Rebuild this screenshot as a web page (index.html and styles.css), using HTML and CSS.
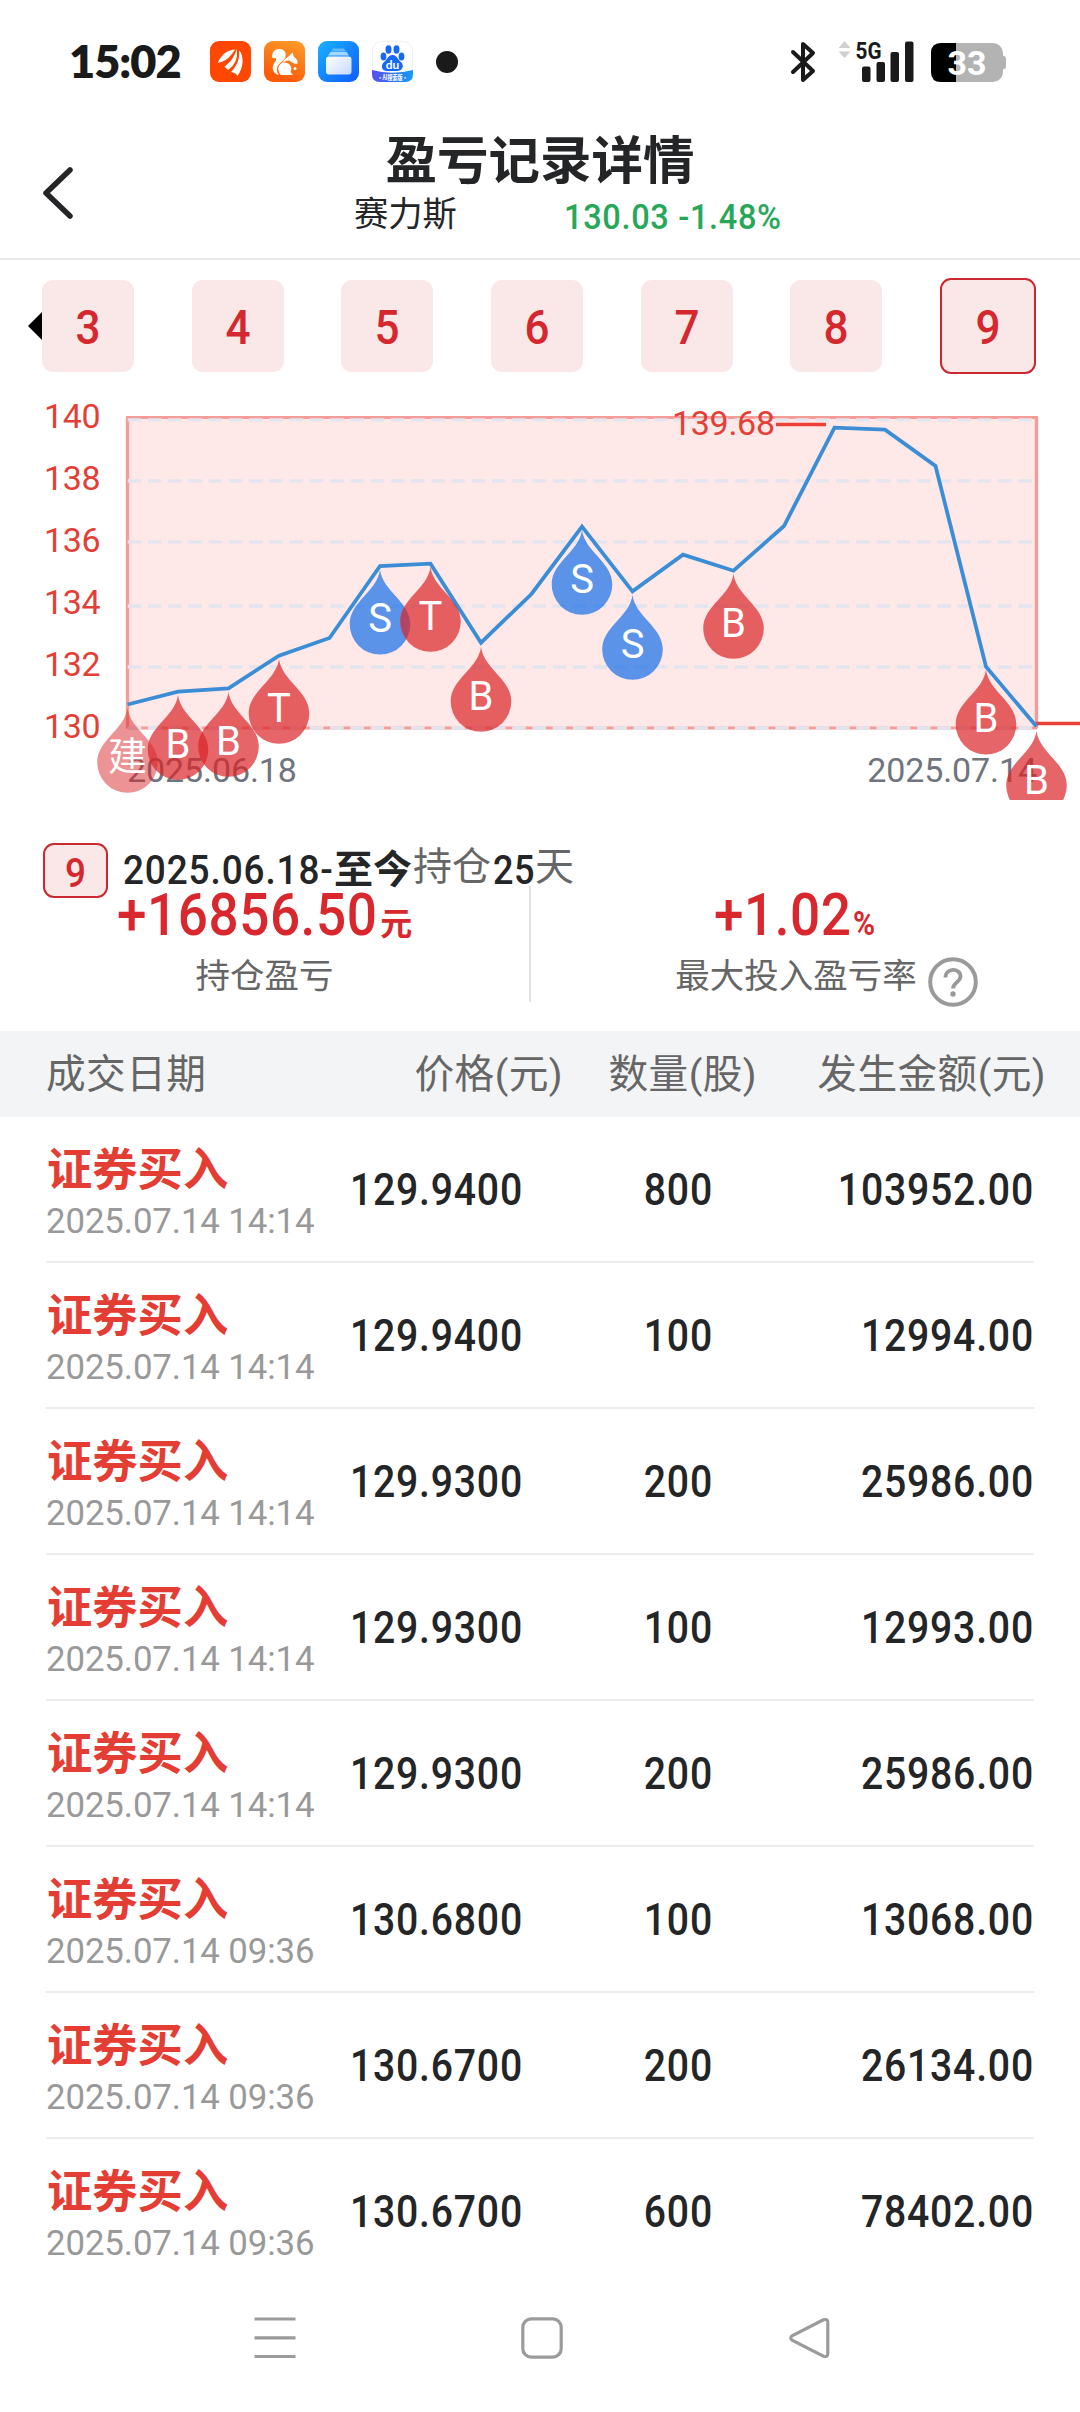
FILE: index.html
```html
<!DOCTYPE html>
<html lang="zh-CN">
<head>
<meta charset="utf-8">
<title>盈亏记录详情</title>
<link rel="stylesheet" href="styles.css">
</head>
<body>
<div class="statusbar">
  <span class="clock">15:02</span>
  <div class="apps">
    <svg class="app" viewBox="0 0 41 41"><rect width="41" height="41" rx="9" fill="#ff4700"/><path d="M8.500 20C13 12 18 9 25 8.500C21 15 17 20 8 22ZM14.500 25.500C22 20 25 14 26.500 8C28.500 17 25 24 18 29ZM21 31C28 24 30 16 29 9C34.500 15 33.500 27 27.500 35Q26.500 32 21 31Z" fill="#fff"/></svg>
    <svg class="app" viewBox="0 0 41 41"><defs><linearGradient id="uc" x1="1" y1="0" x2=".6" y2="1"><stop offset="0" stop-color="#ffa02c"/><stop offset="1" stop-color="#fb5a08"/></linearGradient></defs><rect width="41" height="41" rx="9" fill="url(#uc)"/><path d="M8 16C8 10 12 7.500 16 8C21 8.500 23 13 21 17C19 21 14 22 13 27C12.500 30 13.500 32 15 34C10 33 8 29 9 25C10 21 13 20 12 17.500C11 15.500 10 19 8 16ZM28.500 11.500L30 16C33 18 34 20 33.500 22.500C30 23.500 28 21 26 20C24 19 21 20 18 22.500C20 17.500 25 16 28.500 11.500Z" fill="#fff"/><path d="M15 31A6.500 6.500 0 1 1 26.500 31L29 34H17Q15.500 33 15 31Z" fill="#fff"/><circle cx="31" cy="27.500" r="1.500" fill="#fff"/></svg>
    <svg class="app" viewBox="0 0 41 41"><defs><linearGradient id="fb" x1="0" y1="0" x2="1" y2="1"><stop offset="0" stop-color="#19b1ff"/><stop offset="1" stop-color="#105cff"/></linearGradient><linearGradient id="fc" x1="0" y1="0" x2="1" y2="1"><stop offset="0" stop-color="#fff"/><stop offset="1" stop-color="#c5dafc"/></linearGradient></defs><rect width="41" height="41" rx="9" fill="url(#fb)"/><path d="M15 7.500H26L28 10.500H13Z" fill="#63bbff"/><path d="M12.500 11H28.500L31 14.500H10Z" fill="#a5d6ff"/><rect x="8" y="15.500" width="25.500" height="18" rx="3" fill="url(#fc)"/></svg>
    <svg class="app" viewBox="0 0 41 41"><defs><linearGradient id="bd" x1="0" y1="0" x2="1" y2="0"><stop offset="0" stop-color="#5a4cf0"/><stop offset="1" stop-color="#129cf5"/></linearGradient></defs><rect x=".5" y=".5" width="40" height="40" rx="9" fill="#fff" stroke="#f1f1f1"/><path d="M0 29Q20 34.500 41 29V33Q41 41 33 41H8Q0 41 0 33Z" fill="url(#bd)"/><g fill="#1768f2"><ellipse cx="11.500" cy="15.500" rx="2.900" ry="4"/><ellipse cx="16.500" cy="8.500" rx="3" ry="4.200"/><ellipse cx="24.500" cy="8.500" rx="3" ry="4.200"/><ellipse cx="29.500" cy="15.500" rx="2.900" ry="4"/><path d="M20.500 14C25 14 26 19 29 21C33 25 30 30 25 30H15C10 30 8 25 12 21C15 19 16 14 20.500 14Z"/></g><text x="20.500" y="27.500" text-anchor="middle" class="du">du</text><text x="20.500" y="39" text-anchor="middle" class="ai" textLength="30" lengthAdjust="spacingAndGlyphs">·AI搜索版·</text></svg>
  </div>
  <span class="dot"></span>
  <svg class="indicators" viewBox="788 36 220 52" width="220" height="52">
    <path d="M793 52L813 71L803 80V44L813 53L793 72" fill="none" stroke="#1a1a1a" stroke-width="4" stroke-linejoin="round" stroke-linecap="round"/>
    <path d="M838.500 48L844.500 41L850.500 48ZM838.500 51.500H850.500L844.500 58Z" fill="#d0d0d0"/>
    <text x="855.500" y="58.500" class="net" textLength="26" lengthAdjust="spacingAndGlyphs">5G</text>
    <g fill="#1a1a1a"><rect x="862" y="66.500" width="8.500" height="15.500" rx="2"/><rect x="876.500" y="62" width="8.500" height="20" rx="2"/><rect x="890.500" y="52" width="8.500" height="30" rx="2"/><rect x="905" y="41.500" width="8.500" height="40.500" rx="2"/></g>
    <rect x="931" y="43" width="72" height="39" rx="10" fill="#b3b3b3"/><path d="M1003 55.500Q1006 56 1006 59V66Q1006 69 1003 69.500Z" fill="#b3b3b3"/>
    <path d="M956 43H941Q931 43 931 53V72Q931 82 941 82H956Z" fill="#000"/>
    <text x="967" y="75" text-anchor="middle" class="batt">33</text>
  </svg>
</div>

<header class="header">
  <svg class="back" viewBox="0 0 34 54" width="34" height="54"><path d="M29 4L5 27L29 50" fill="none" stroke="#242527" stroke-width="5.500" stroke-linecap="round" stroke-linejoin="round"/></svg>
  <div class="heading">
    <h1 class="title">盈亏记录详情</h1>
    <div class="quote"><span class="stock">赛力斯</span><span class="price">130.03 -1.48%</span></div>
  </div>
</header>

<nav class="tabs">
  <svg class="prev" viewBox="0 0 14 28" width="14" height="28"><path d="M14 0V28L0 14Z"/></svg>
  <span class="tab"><span class="num">3</span></span><span class="tab"><span class="num">4</span></span><span class="tab"><span class="num">5</span></span><span class="tab"><span class="num">6</span></span><span class="tab"><span class="num">7</span></span><span class="tab"><span class="num">8</span></span><span class="tab tab-active"><span class="num">9</span></span>
</nav>

<svg class="chart" viewBox="0 392 1080 408" width="1080" height="408">
  <defs><path id="drop" d="M0 0C3 22 30.300 32 30.300 54.500A30.300 30.300 0 0 1 -30.300 54.500C-30.300 32 -3 22 0 0Z"/></defs>
  <rect x="127.500" y="417" width="909" height="311" fill="#ffe9e8"/>
  <path d="M127.500 728.500V417.500M1036.500 417.500V728.500" stroke="#f49c97" stroke-width="3.400"/>
  <path d="M126 417.500H1038M128 728H1037" stroke="#f49c97" stroke-width="3"/>
  <g stroke="#e2e4ee" stroke-width="3.300" stroke-dasharray="13.500 6.740">
    <path d="M127.700 419.800H1036"/><path d="M127.700 480.800H1032"/><path d="M127.700 541.800H1032"/><path d="M127.700 606H1032"/><path d="M127.700 667H1032"/><path d="M127.700 728H1036"/>
  </g>
  <g class="axis"><text x="44" y="428">140</text><text x="44" y="490">138</text><text x="44" y="552">136</text><text x="44" y="613.500">134</text><text x="44" y="676">132</text><text x="44" y="738">130</text><text x="672" y="435">139.68</text></g>
  <path d="M776 424.500H826M1036 723.500H1080" stroke="#ea4238" stroke-width="3.400"/>
  <g class="dates"><text x="127" y="782">2025.06.18</text><text x="1037" y="782" text-anchor="end">2025.07.14</text></g>
  <polyline fill="none" stroke="#3b8ed6" stroke-width="3.800" points="127.500,704.500 178,691.700 228.500,688.300 279,655.700 329.500,638 380,566 430.500,563.700 481,642.700 531.500,594 582,526.700 632.500,591.300 683,554.700 733.500,570.700 784,526 834.500,427.700 885,429.700 935.500,466 986,666.700 1036.500,726.500"/>
  <g class="marks">
    <g transform="translate(127.500 708)"><use href="#drop" class="open"/><text y="62" class="cn">建</text></g>
    <g transform="translate(178 695)"><use href="#drop" class="buy"/><text y="62.500">B</text></g>
    <g transform="translate(228.500 692)"><use href="#drop" class="buy"/><text y="62.500">B</text></g>
    <g transform="translate(279 659)"><use href="#drop" class="buy"/><text y="62.500">T</text></g>
    <g transform="translate(380 569.700)"><use href="#drop" class="sell"/><text y="62.500">S</text></g>
    <g transform="translate(430.500 567)"><use href="#drop" class="buy"/><text y="62.500">T</text></g>
    <g transform="translate(481 647)"><use href="#drop" class="buy"/><text y="62.500">B</text></g>
    <g transform="translate(582 530)"><use href="#drop" class="sell"/><text y="62.500">S</text></g>
    <g transform="translate(632.500 595)"><use href="#drop" class="sell"/><text y="62.500">S</text></g>
    <g transform="translate(733.500 574)"><use href="#drop" class="buy"/><text y="62.500">B</text></g>
    <g transform="translate(986 669.700)"><use href="#drop" class="buy"/><text y="62.500">B</text></g>
    <g transform="translate(1036.500 731)"><use href="#drop" class="buy"/><text y="62.500">B</text></g>
  </g>
</svg>

<section class="position">
  <div class="period">
    <span class="badge"><span class="num">9</span></span>
    <span class="range">2025.06.18-</span><span class="now">至今</span><span class="held">持仓</span><span class="days">25</span><span class="held">天</span>
  </div>
  <div class="stats">
    <div class="stat">
      <div class="figure"><span class="amount amount-profit">+16856.50</span><span class="unit">元</span></div>
      <div class="label">持仓盈亏</div>
    </div>
    <div class="stat stat-rate">
      <div class="figure"><span class="amount amount-rate">+1.02</span><span class="unit pct">%</span></div>
      <div class="label">最大投入盈亏率<svg class="help" viewBox="0 0 50 50" width="50" height="50"><circle cx="25" cy="25" r="22.800" fill="none" stroke="#9a9a9a" stroke-width="4"/><path d="M17.500 20.500C17.500 10.500 32.500 10.500 32.500 19.500C32.500 25 25 25.500 25 31.500" fill="none" stroke="#9a9a9a" stroke-width="3.800"/><circle cx="25" cy="37" r="2.700" fill="#9a9a9a"/></svg></div>
    </div>
  </div>
</section>

<div class="thead"><span>成交日期</span><span>价格(元)</span><span>数量(股)</span><span>发生金额(元)</span></div>
<div class="rows">
  <div class="row"><div class="trade"><b>证券买入</b><time>2025.07.14 14:14</time></div><span class="value">129.9400</span><span class="value">800</span><span class="value">103952.00</span></div>
  <div class="row"><div class="trade"><b>证券买入</b><time>2025.07.14 14:14</time></div><span class="value">129.9400</span><span class="value">100</span><span class="value">12994.00</span></div>
  <div class="row"><div class="trade"><b>证券买入</b><time>2025.07.14 14:14</time></div><span class="value">129.9300</span><span class="value">200</span><span class="value">25986.00</span></div>
  <div class="row"><div class="trade"><b>证券买入</b><time>2025.07.14 14:14</time></div><span class="value">129.9300</span><span class="value">100</span><span class="value">12993.00</span></div>
  <div class="row"><div class="trade"><b>证券买入</b><time>2025.07.14 14:14</time></div><span class="value">129.9300</span><span class="value">200</span><span class="value">25986.00</span></div>
  <div class="row"><div class="trade"><b>证券买入</b><time>2025.07.14 09:36</time></div><span class="value">130.6800</span><span class="value">100</span><span class="value">13068.00</span></div>
  <div class="row"><div class="trade"><b>证券买入</b><time>2025.07.14 09:36</time></div><span class="value">130.6700</span><span class="value">200</span><span class="value">26134.00</span></div>
  <div class="row"><div class="trade"><b>证券买入</b><time>2025.07.14 09:36</time></div><span class="value">130.6700</span><span class="value">600</span><span class="value">78402.00</span></div>
</div>

<footer class="navbar">
  <svg viewBox="0 0 42 42" width="42" height="42"><path d="M.500 2H41.500M.500 20.800H41.500M.500 39.500H41.500"/></svg>
  <svg viewBox="0 0 42 42" width="42" height="42"><rect x="1.800" y="1.800" width="38.400" height="38.400" rx="8.500"/></svg>
  <svg viewBox="0 0 42 42" width="42" height="42"><path d="M34.500 2.800L3.500 18.500Q0 21 3.500 23.500L34.500 39.200Q38.800 40.500 38.800 36.500V5.500Q38.800 1.500 34.500 2.800Z"/></svg>
</footer>
</body>
</html>
```
FILE: styles.css
```css
* { box-sizing: border-box; }
body {
  margin: 0;
  width: 1080px;
  height: 2412px;
  overflow: hidden;
  background: #fff;
  color: #242527;
  font-family: Roboto, "Noto Sans CJK SC", sans-serif;
}
svg { display: block; flex: none; }

/* Status bar */
.statusbar { display: flex; align-items: center; height: 120px; padding: 0 72px 0 69px; }
.clock { width: 141px; font: 800 46px/60px Lato, sans-serif; letter-spacing: -1px; color: #1a1a1a; padding-top: 2px; white-space: nowrap; transform: scaleX(.98); transform-origin: left; }
.apps { display: flex; gap: 13px; padding-top: 3px; }
.app { width: 41px; height: 41px; overflow: visible; }
.du { font: 700 12px Lato, sans-serif; fill: #fff; }
.ai { font: 700 7px "Noto Sans CJK SC", sans-serif; fill: #fff; }
.dot { width: 22px; height: 22px; margin: 4px 0 0 23px; border-radius: 50%; background: #1a1a1a; }
.indicators { margin: 4px 0 0 auto; }
.net { font: 700 24px Roboto, sans-serif; fill: #1a1a1a; }
.batt { font: 700 34px Roboto, sans-serif; fill: #fff; }

/* Page header */
.header { display: grid; grid-template-columns: 120px 840px; height: 140px; border-bottom: 2px solid #e9e9e9; }
.back { margin: 46px 0 0 41px; }
.heading { padding-top: 12px; }
.title { margin: 0; font-size: 51.5px; font-weight: 700; line-height: 60px; text-align: center; }
.quote { display: flex; line-height: 45px; padding-left: 234px; }
.stock { width: 210px; font-size: 34.3px; }
.price { padding-top: 3px; font-size: 35px; font-weight: 500; letter-spacing: .7px; color: #27a758; white-space: nowrap; transform: scaleX(.93); transform-origin: left; }

/* Condensed digits */
.num { display: block; transform: scaleX(.9); }

/* Record tabs */
.tabs { display: flex; align-items: center; height: 132px; padding-left: 28px; }
.tab {
  flex: none;
  width: 92px;
  height: 92px;
  margin-right: 57.7px;
  border-radius: 11px;
  background: #fae8e8;
  color: #d4282e;
  font-size: 49px;
  font-weight: 500;
  line-height: 96px;
  text-align: center;
}
.tab-active { width: 96px; height: 96px; margin: 0; border: 2px solid #c9292f; line-height: 96px; }

/* Price chart */
.chart { overflow: hidden; }
.axis { font-size: 34px; letter-spacing: -.3px; fill: #e43f36; }
.dates { font-size: 34px; letter-spacing: -.1px; fill: #6f747d; }
.marks { font-size: 40px; fill: #fff; text-anchor: middle; }
.cn { font-size: 39px; }
.open { fill: rgba(218, 39, 43, .5); }
.buy { fill: rgba(218, 35, 40, .7); }
.sell { fill: rgba(21, 109, 232, .7); }

/* Position summary */
.position { height: 231px; padding-top: 43px; }
.period { display: flex; align-items: center; height: 55px; padding-left: 43px; font-size: 41px; line-height: 57px; white-space: nowrap; }
.badge { width: 65px; height: 55px; margin-right: 15px; border: 2px solid #c9292f; border-radius: 11px; background: #fae8e8; color: #d4282e; font-weight: 500; line-height: 57px; text-align: center; }
.range { width: 211px; font-weight: 500; letter-spacing: 1px; transform: scaleX(.9); transform-origin: left; }
.now { width: 79px; font-size: 39px; font-weight: 700; }
.held { width: 80px; margin-top: -7px; font-size: 39px; color: #666; }
.days { width: 42px; font-weight: 500; letter-spacing: .5px; transform: scaleX(.88); transform-origin: left; }
.stats { display: grid; grid-template: 116px / 531px 530px; height: 116px; margin-top: -12px; }
.stat:first-child { border-right: 2px solid #e2e2e2; }
.figure { display: flex; justify-content: center; align-items: baseline; line-height: 57px; color: #d9272e; font-weight: 500; }
.amount { font-size: 59px; letter-spacing: .6px; transform: scaleX(.9); transform-origin: left; }
.amount-profit { margin-right: -30px; }
.amount-rate { margin-right: -15px; }
.unit { margin-left: 4px; font-size: 32px; font-weight: 700; line-height: 1; }
.pct { margin-left: 2px; font-size: 34px; font-weight: 700; transform: scaleX(.88); transform-origin: left; }
.label { display: flex; justify-content: center; align-items: center; height: 67px; font-size: 34.5px; line-height: 67px; color: #666; }
.help { margin: 11px -61px 0 11px; }

/* Trade table */
.thead { display: grid; grid-template-columns: 300px 217px 194px 289px; height: 86px; padding-left: 46px; background: #f3f4f6; color: #666; font-size: 39.7px; letter-spacing: .4px; line-height: 88px; text-align: right; }
.thead span:first-child { text-align: left; }
.rows { height: 1168px; padding: 0 46px; }
.row { display: grid; grid-template-columns: 275px 202px 190px 321px; height: 146px; border-bottom: 2px solid #ececec; line-height: 148px; text-align: right; }
.row:last-child { border-bottom: 0; }
.value { font-size: 43.5px; font-weight: 500; letter-spacing: .9px; transform: scaleX(.9); transform-origin: right; }
.trade { display: flex; flex-direction: column; padding: 24px 0 0 1px; text-align: left; white-space: nowrap; }
.trade b { font-size: 45.3px; line-height: 60px; color: #e43e34; }
.trade time { margin: -1px 0 0 -1px; font-size: 34.8px; font-weight: 400; letter-spacing: -.1px; line-height: 42px; color: #999; }

/* System navigation */
.navbar { display: flex; gap: 225.500px; padding: 32px 0 0 253.500px; }
.navbar svg { fill: none; stroke: #9b9b9b; stroke-width: 3.200; }
```
